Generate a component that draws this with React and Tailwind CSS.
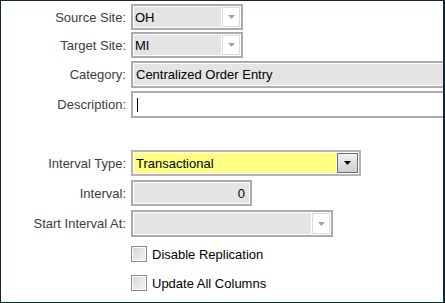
import React from "react";

// small down-pointing triangle for combo buttons
const Arrow = ({ dark }) => (
  <svg width="7" height="4" viewBox="0 0 7 4">
    <path d="M0 0h7L3.5 4z" fill={dark ? "#000" : "#a0a0a0"} />
  </svg>
);

const Row = ({ label, h, mt, children }) => (
  <div className="flex gap-[4px]" style={{ height: h, marginTop: mt }}>
    <div className="w-[126px] shrink-0 flex items-center justify-end text-[#3c3c3c] pr-[1px]">{label}</div>
    <div className="flex-1 min-w-0 h-full">{children}</div>
  </div>
);

const Combo = ({ value, width, active }) => (
  <div
    className={`flex h-full border-2 ${active ? "border-[#b4b4b4]" : "border-[#ababab]"} bg-white p-[1px] gap-[1px]`}
    style={{ width }}
  >
    <div
      className={`flex-1 flex items-center pl-[1px] text-black ${active ? "bg-[#ffff80] border border-[#ffff80]" : "bg-[#e4e4e4]"}`}
    >
      {value}
    </div>
    {active ? (
      <div className="w-[21px] flex items-center justify-center border border-[#6e6e6e] bg-gradient-to-b from-[#f2f2f2] to-[#cfcfcf]">
        <Arrow dark />
      </div>
    ) : (
      <div className="w-[18px] flex items-center justify-center border border-[#dcdcdc] bg-white">
        <Arrow />
      </div>
    )}
  </div>
);

const Text = ({ value, disabled, cursor }) => (
  <div className="h-full w-[320px] border-2 border-r-0 border-[#ababab] bg-white p-[1px]">
    <div
      className={`h-full flex items-center px-[2px] text-black ${disabled ? "bg-[#e4e4e4]" : "bg-white"}`}
    >
      {cursor ? <span className="w-[1px] h-[14px] bg-black ml-[1px]" /> : value}
    </div>
  </div>
);

const Check = ({ label, mt }) => (
  <div className="flex items-center gap-[5px] text-black pl-[130px]" style={{ marginTop: mt }}>
    <div className="w-[16px] h-[16px] border border-[#8a8a8a] bg-white p-[1px]">
      <div className="w-full h-full bg-gradient-to-br from-[#d8d8d8] to-[#f4f4f4]" />
    </div>
    <span>{label}</span>
  </div>
);

export default function App() {
  return (
    <div
      className="w-[445px] h-[303px] bg-white border border-r-2 border-[#0f2a2a] overflow-hidden text-[13px] leading-none pt-[3px]"
      style={{ fontFamily: '"Liberation Sans", Arial, sans-serif' }}
    >
      <Row label="Source Site:" h={26} mt={0}>
        <Combo value="OH" width={112} />
      </Row>
      <Row label="Target Site:" h={26} mt={2}>
        <Combo value="MI" width={112} />
      </Row>
      <Row label="Category:" h={27} mt={3}>
        <Text value="Centralized Order Entry" disabled />
      </Row>
      <Row label="Description:" h={27} mt={3}>
        <Text cursor />
      </Row>

      <Row label="Interval Type:" h={26} mt={32}>
        <Combo value="Transactional" width={230} active />
      </Row>
      <Row label="Interval:" h={26} mt={4}>
        <div className="h-full w-[121px] border-2 border-[#ababab] bg-white p-[1px]">
          <div className="h-full flex items-center justify-end pr-[4px] bg-[#e4e4e4] text-black">0</div>
        </div>
      </Row>
      <Row label="Start Interval At:" h={27} mt={4}>
        <Combo value="" width={202} />
      </Row>

      <Check label="Disable Replication" mt={9} />
      <Check label="Update All Columns" mt={13} />
    </div>
  );
}
